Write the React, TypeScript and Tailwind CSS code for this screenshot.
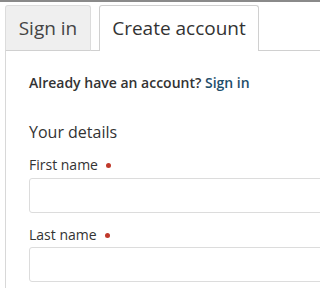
export default function App() {
  return (
    <div className="w-full h-[288px] overflow-hidden bg-white text-[#333]" style={{ fontFamily: '"Open Sans", sans-serif' }}>
      <div className="h-[2px] bg-[#8a8a8a]" />
      <div className="flex items-end pt-[3px] pl-[5px]">
        <div className="w-[86px] h-[46px] bg-[#efefef] border border-[#dcdcdc] border-b-[#d0d0d0] rounded-t-[3px] flex items-center justify-center text-[19px] text-[#444]">
          Sign in
        </div>
        <div className="w-[8px] h-[46px] border-b border-[#d0d0d0]" />
        <div className="w-[160px] h-[46px] bg-white border border-b-0 border-[#d0d0d0] rounded-t-[3px] flex items-center justify-center text-[19px] text-[#333]">
          Create account
        </div>
        <div className="flex-1 h-[46px] border-b border-[#d0d0d0]" />
      </div>
      <div className="ml-[5px] border-l border-[#d8d8d8] pl-[23px] pt-[22px] h-[240px]">
        <p className="text-[14px] font-semibold leading-[20px] whitespace-nowrap">
          Already have an account? <span className="text-[#1d4e6b]">Sign in</span>
        </p>
        <p className="text-[16px] leading-[22px] mt-[28px]">Your details</p>
        <div className="mt-[12px] flex items-center text-[14px] leading-[20px]">
          First name
          <span className="ml-[8px] w-[5px] h-[5px] rounded-full bg-[#c0392b]" />
        </div>
        <div className="mt-[3px] h-[35px] border border-[#dcdcdc] rounded-[3px] w-[400px]" />
        <div className="mt-[12px] flex items-center text-[14px] leading-[20px]">
          Last name
          <span className="ml-[8px] w-[5px] h-[5px] rounded-full bg-[#c0392b]" />
        </div>
        <div className="mt-[2px] h-[35px] border border-[#dcdcdc] rounded-[3px] w-[400px]" />
      </div>
    </div>
  );
}
